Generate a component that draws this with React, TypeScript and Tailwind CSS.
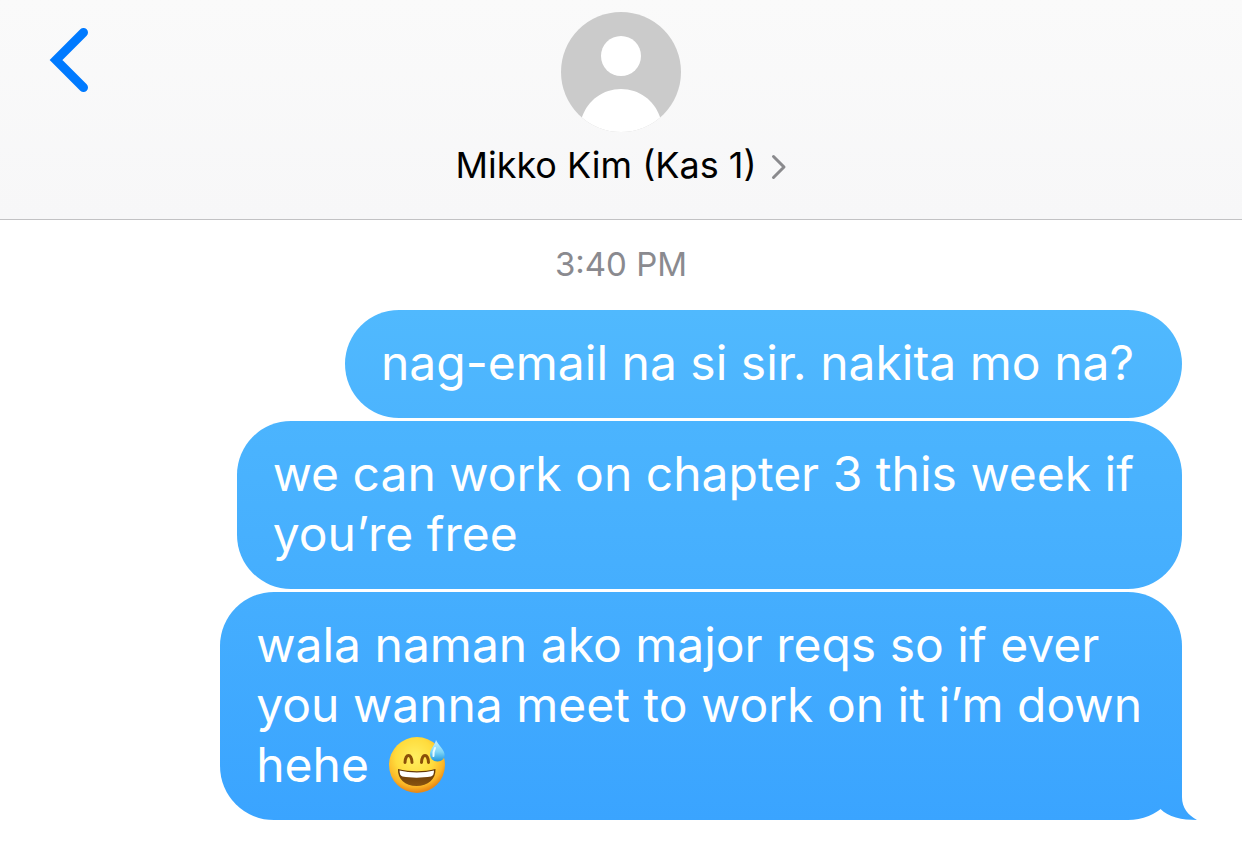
import clsx from 'clsx'
import type { ReactNode } from 'react'

interface BubbleProps {
  className: string
  tail?: boolean
  children: ReactNode
}

function BackIcon() {
  return (
    <svg viewBox="0 0 40 66" className="h-[66px] w-10" fill="none" aria-hidden="true">
      <path d="M35.5 4.5 L8 32 L35.5 59.5" stroke="#007aff" strokeWidth="9" strokeLinecap="round" strokeLinejoin="miter" />
    </svg>
  )
}

function Avatar() {
  return (
    <svg viewBox="0 0 120 120" className="size-[120px]" role="img" aria-label="Contact photo">
      <defs>
        <clipPath id="avatar-clip">
          <circle cx="60" cy="60" r="60" />
        </clipPath>
      </defs>
      <g clipPath="url(#avatar-clip)">
        <rect width="120" height="120" fill="#cbcbcb" />
        <circle cx="60" cy="44" r="20" fill="#fff" />
        <path d="M21 105 C27 88 42 77 60 77 C78 77 93 88 99 105 V120 H21 Z" fill="#fff" />
      </g>
    </svg>
  )
}

function SweatSmile() {
  return (
    <svg viewBox="0 0 58 58" className="-my-2 ml-1.5 inline-block size-[58px] align-[-4px]" role="img" aria-label="grinning face with sweat">
      <defs>
        <radialGradient id="face" cx="0.46" cy="0.36" r="0.62">
          <stop offset="0" stopColor="#ffef62" />
          <stop offset="0.55" stopColor="#ffdc3d" />
          <stop offset="0.85" stopColor="#fbb526" />
          <stop offset="1" stopColor="#ea8a16" />
        </radialGradient>
        <linearGradient id="mouth" x1="0" y1="0" x2="0" y2="1">
          <stop offset="0" stopColor="#5f3406" />
          <stop offset="1" stopColor="#8a5410" />
        </linearGradient>
        <linearGradient id="drop" x1="0" y1="0" x2="0" y2="1">
          <stop offset="0" stopColor="#c9f1ff" />
          <stop offset="0.55" stopColor="#7fd6f8" />
          <stop offset="1" stopColor="#2196dc" />
        </linearGradient>
      </defs>
      <circle cx="29" cy="29" r="28" fill="url(#face)" />
      <path d="M17 26.5 C17.5 17 23.500 17 24 26.5" fill="none" stroke="#8a4f08" strokeWidth="3" strokeLinecap="round" />
      <path d="M33.5 26.5 C34 17 40 17 40.5 26.5" fill="none" stroke="#8a4f08" strokeWidth="3" strokeLinecap="round" />
      <path d="M10 33 C22 36 36 36 47.5 33 C48 43 40 50 28.5 50 C17 50 9.5 43 10 33 Z" fill="url(#mouth)" />
      <path d="M11.5 34.5 C22 37 36 37 46 34.5 C46 38 45 40 43 40.5 C34 42 23 42 14.5 40.5 C12.5 40 11.5 38 11.5 34.5 Z" fill="#fff" />
      <path d="M48 4 C47 9 42 13 42 18 C42 22.5 45 25.5 49.5 25.5 C54 25.5 57 22.5 56.5 18 C56 13 50 9 48 4 Z" fill="url(#drop)" />
      <path d="M47 12 C45.5 15 45 17 45.5 20" fill="none" stroke="#e8faff" strokeWidth="2" strokeLinecap="round" />
    </svg>
  )
}

function Bubble({ className, tail = false, children }: BubbleProps) {
  return (
    <li
      className={clsx(
        'relative rounded-[54px] bg-linear-to-b pt-[23px] pb-[25px] pl-9 text-[48px] leading-[60px] text-white',
        className,
      )}
    >
      {children}
      {tail && (
        <svg viewBox="0 0 70 54" className="absolute -right-4 bottom-0 h-[54px] w-[70px]" aria-hidden="true">
          <defs>
            <linearGradient id="tail" x1="0" y1="0" x2="0" y2="1">
              <stop offset="0" stopColor="#3ca7ff" />
              <stop offset="1" stopColor="#3aa4ff" />
            </linearGradient>
          </defs>
          <path d="M54 0 V31 C54 42 60 49 69 54 C54 54 40 51 32.5 43 L30 20 Z" fill="url(#tail)" />
        </svg>
      )}
    </li>
  )
}

export default function App() {
  return (
    <div className="min-h-screen bg-white font-['Inter','Liberation_Sans',sans-serif]">
      <header className="grid grid-cols-[1fr_auto_1fr] items-start border-b border-[#c2c2c4] bg-linear-to-b from-[#fafafa] to-[#f7f7f8] pt-3 pb-8">
        <button type="button" aria-label="Back" className="mt-4 ml-12 w-10">
          <BackIcon />
        </button>
        <button type="button" className="flex flex-col items-center gap-[11px] text-black">
          <Avatar />
          <span className="flex items-center gap-3.5 text-[36px] leading-[44px]">
            Mikko Kim (Kas 1)
            <svg viewBox="0 0 16 26" className="mt-1 h-[26px] w-4" fill="none" aria-hidden="true">
              <path d="M2.5 2.5 L13 13 L2.5 23.5" stroke="#8a8a8d" strokeWidth="3" strokeLinecap="round" strokeLinejoin="round" />
            </svg>
          </span>
        </button>
      </header>
      <main className="pt-6 pb-7">
        <p className="text-center text-[33px] leading-[40px] text-[#8a8a8f]">3:40 PM</p>
        <ol className="mt-[26px] flex flex-col items-end gap-[3px] pr-[60px] pl-6">
          <Bubble className="from-[#50b9fe] to-[#4cb4fe] pr-12">nag-email na si sir. nakita mo na?</Bubble>
          <Bubble className="from-[#4bb4fe] to-[#45aefe] pr-12">
            we can work on chapter 3 this week if
            <br />
            you’re free
          </Bubble>
          <Bubble className="from-[#45aefe] to-[#3aa4ff] pr-10" tail>
            wala naman ako major reqs so if ever
            <br />
            you wanna meet to work on it i’m down
            <br />
            hehe <SweatSmile />
          </Bubble>
        </ol>
      </main>
    </div>
  )
}
